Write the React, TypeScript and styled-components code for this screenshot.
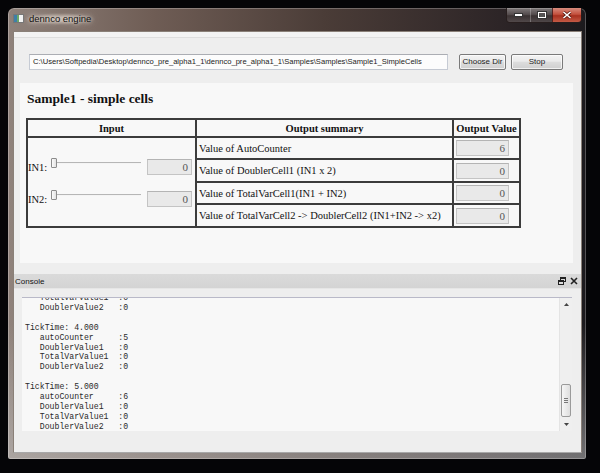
import React from 'react';
import styled, { createGlobalStyle } from 'styled-components';

const GlobalStyle = createGlobalStyle`
  html, body {
    margin: 0;
    padding: 0;
    background: #050507;
  }
`;

const Screen = styled.div`
  width: 600px;
  height: 473px;
  box-sizing: border-box;
  padding: 8px 14px 14px 8px;
  background: #050507;
  overflow: hidden;
`;

const Window = styled.div`
  height: 100%;
  display: flex;
  flex-direction: column;
  border-radius: 6px 6px 2px 2px;
  padding: 0 4px 6px 5px;
  box-sizing: border-box;
  background:
    linear-gradient(180deg, rgba(0, 0, 0, 0) 0%, rgba(0, 0, 0, 0) 70%, rgba(200, 200, 200, 0.5) 100%),
    linear-gradient(90deg, #8f827b 0%, #6f5d55 25%, #4a3c37 55%, #2d2527 85%, #1c1a1d 100%);
  box-shadow: inset 0 0 0 1px rgba(255, 255, 255, 0.25);
`;

const TitleBar = styled.div`
  height: 23px;
  display: flex;
  align-items: flex-start;
`;

const AppIcon = styled.svg`
  margin: 6px 0 0 0;
  flex: none;
`;

const TitleText = styled.span`
  margin-top: 5px;
  font-family: 'Liberation Sans', Arial, sans-serif;
  font-size: 9.5px;
  line-height: 12px;
  color: #111;
  padding: 0 5px;
  border-radius: 6px;
  text-shadow: 0 0 4px rgba(245, 238, 230, 0.95), 0 0 8px rgba(245, 238, 230, 0.8);
  background: radial-gradient(ellipse at center, rgba(236, 226, 216, 0.55) 20%, rgba(236, 226, 216, 0) 70%);
`;

const Spacer = styled.div`
  flex: 1;
`;

const Controls = styled.div`
  display: flex;
  height: 14px;
  border: 1px solid rgba(40, 30, 30, 0.9);
  border-top: none;
  border-radius: 0 0 4px 4px;
  overflow: hidden;
`;

const CtrlButton = styled.div<{ $close?: boolean; $w: number }>`
  width: ${(p) => p.$w}px;
  display: flex;
  align-items: center;
  justify-content: center;
  box-sizing: border-box;
  border-left: ${(p) => (p.$close ? '1px solid rgba(60,20,20,0.8)' : '1px solid rgba(255,255,255,0.25)')};
  background: ${(p) =>
    p.$close
      ? 'linear-gradient(180deg, #d88c7e 0%, #c4513e 45%, #a8301f 55%, #c45a45 100%)'
      : 'linear-gradient(180deg, rgba(200,195,195,0.55) 0%, rgba(120,110,110,0.5) 50%, rgba(70,60,60,0.6) 55%, rgba(120,110,110,0.5) 100%)'};
  &:first-child {
    border-left: none;
  }
`;

const Client = styled.div`
  flex: 1;
  display: flex;
  flex-direction: column;
  background: #eeeeee;
  border: 1px solid #8a8078;
  border-bottom-color: #a8a8a8;
  min-height: 0;
`;

const MenuStrip = styled.div`
  height: 5px;
  border-bottom: 1px solid #dedede;
  background: #f3f3f3;
`;

const PathRow = styled.div`
  display: flex;
  align-items: center;
  padding: 16px 18px 0 15px;
  height: 16px;
`;

const PathField = styled.div`
  flex: 1;
  height: 16px;
  box-sizing: border-box;
  border: 1px solid #c6cbd4;
  border-top-color: #abadb3;
  background: #fcfcfc;
  font-family: 'Liberation Sans', Arial, sans-serif;
  font-size: 7.6px;
  line-height: 14px;
  padding-left: 3px;
  color: #222;
  white-space: nowrap;
  overflow: hidden;
`;

const PushButton = styled.div<{ $w: number; $gap: number }>`
  width: ${(p) => p.$w}px;
  margin-left: ${(p) => p.$gap}px;
  height: 16px;
  box-sizing: border-box;
  border: 1px solid #7a7a7a;
  border-radius: 2px;
  background: linear-gradient(180deg, #f3f3f3 0%, #ebebeb 45%, #dddddd 50%, #cfcfcf 100%);
  box-shadow: inset 0 0 0 1px rgba(255, 255, 255, 0.7);
  font-family: 'Liberation Sans', Arial, sans-serif;
  font-size: 8px;
  line-height: 14px;
  text-align: center;
  color: #222;
`;

const Panel = styled.div`
  margin: 13px 8px 0 6px;
  height: 180px;
  box-sizing: border-box;
  padding: 8px 6px;
  background: #f8f8f8;
`;

const PanelTitle = styled.div`
  font-family: 'Liberation Serif', 'Times New Roman', serif;
  font-weight: bold;
  font-size: 13.5px;
  line-height: 16px;
  height: 16px;
  color: #111;
  padding-left: 1px;
  margin-bottom: 11px;
`;

const Table = styled.table`
  border-collapse: collapse;
  font-family: 'Liberation Serif', 'Times New Roman', serif;
  font-size: 10.5px;
  color: #111;
`;

const HeadCell = styled.th<{ $w: number }>`
  width: ${(p) => p.$w}px;
  height: 18px;
  padding: 0;
  border: 2px solid #3c3c3c;
  font-weight: bold;
  text-align: center;
  box-sizing: border-box;
`;

const Cell = styled.td<{ $h?: number }>`
  border: 2px solid #3c3c3c;
  padding: 0 2px;
  height: ${(p) => p.$h ?? 20}px;
  white-space: nowrap;
`;

const ValueCell = styled.td`
  border: 2px solid #3c3c3c;
  padding: 0 9px 0 2px;
`;

const InputCell = styled.td`
  border: 2px solid #3c3c3c;
  padding: 0;
  vertical-align: middle;
`;

const InputStack = styled.div`
  display: flex;
  flex-direction: column;
  gap: 16px;
  padding-top: 2px;
`;

const InputRow = styled.div`
  display: flex;
  align-items: flex-start;
  height: 16px;
`;

const InputLabel = styled.span`
  width: 23px;
  margin-top: 3px;
  line-height: 12px;
`;

const Slider = styled.div`
  width: 90px;
  height: 12px;
  display: flex;
  align-items: center;
  margin-top: -2px;
`;

const Groove = styled.div`
  flex: 1;
  height: 1px;
  background: #b6b6b6;
  border-bottom: 1px solid #f4f4f4;
  display: flex;
  align-items: center;
`;

const Handle = styled.div`
  width: 6px;
  height: 10px;
  box-sizing: border-box;
  border: 1px solid #8c8c8c;
  border-radius: 1px;
  background: linear-gradient(90deg, #fbfbfb, #e2e2e2);
`;

const ReadBox = styled.div<{ $w: number; $ml?: number }>`
  width: ${(p) => p.$w}px;
  margin-left: ${(p) => p.$ml ?? 0}px;
  height: 16px;
  box-sizing: border-box;
  border: 1px solid #c4c4c4;
  border-top-color: #b4b4b4;
  background: #e9e9e9;
  color: #555;
  font-family: 'Liberation Serif', 'Times New Roman', serif;
  font-size: 11px;
  line-height: 14px;
  text-align: right;
  padding-right: 3px;
`;

const DockTitle = styled.div`
  margin-top: 11px;
  height: 14px;
  display: flex;
  align-items: center;
  background: linear-gradient(180deg, #dadada 0%, #d4d4d4 100%);
  border-bottom: 1px solid #e6e6e6;
  padding: 0 3px 0 1px;
  font-family: 'Liberation Sans', Arial, sans-serif;
  font-size: 8px;
  color: #111;
`;

const DockIcons = styled.div`
  margin-left: auto;
  display: flex;
  gap: 4px;
  align-items: center;
`;

const DockBody = styled.div`
  flex: 1;
  padding: 8px 9px 21px 8px;
  display: flex;
  min-height: 0;
`;

const TextArea = styled.div`
  flex: 1;
  display: flex;
  background: #f8f8f8;
  border-top: 1px solid #b9b9c8;
  overflow: hidden;
`;

const Log = styled.pre`
  flex: 1;
  margin: -5px 0 0 0;
  padding-left: 3px;
  font-family: 'Liberation Mono', 'Courier New', monospace;
  font-size: 8.2px;
  line-height: 9.9px;
  color: #2a2a2a;
`;

const ScrollBar = styled.div`
  width: 12px;
  display: flex;
  flex-direction: column;
  align-items: center;
  background: #efefef;
  border-left: 1px solid #e4e4e4;
`;

const Arrow = styled.div`
  height: 13px;
  display: flex;
  align-items: center;
  justify-content: center;
`;

const Track = styled.div`
  flex: 1;
  width: 100%;
  display: flex;
  flex-direction: column;
  justify-content: flex-end;
  align-items: center;
`;

const Thumb = styled.div`
  width: 10px;
  height: 33px;
  box-sizing: border-box;
  border: 1px solid #9a9a9a;
  border-radius: 2px;
  background: linear-gradient(90deg, #f6f6f6, #dedede);
  display: flex;
  flex-direction: column;
  align-items: center;
  justify-content: center;
  gap: 1px;
  margin-bottom: 1px;
`;

const Grip = styled.div`
  width: 4px;
  height: 1px;
  background: #777;
`;

const logText = [
  '   TotalVarValue1  :0',
  '   DoublerValue2   :0',
  '',
  'TickTime: 4.000',
  '   autoCounter     :5',
  '   DoublerValue1   :0',
  '   TotalVarValue1  :0',
  '   DoublerValue2   :0',
  '',
  'TickTime: 5.000',
  '   autoCounter     :6',
  '   DoublerValue1   :0',
  '   TotalVarValue1  :0',
  '   DoublerValue2   :0',
].join('\n');

const outputs = [
  { label: 'Value of AutoCounter', value: '6', h: 20 },
  { label: 'Value of DoublerCell1 (IN1 x 2)', value: '0', h: 21 },
  { label: 'Value of TotalVarCell1(IN1 + IN2)', value: '0', h: 20 },
  { label: 'Value of TotalVarCell2 -> DoublerCell2 (IN1+IN2 -> x2)', value: '0', h: 21 },
];

const App: React.FC = () => {
  return (
    <>
      <GlobalStyle />
      <Screen>
        <Window>
          <TitleBar>
            <AppIcon width="11" height="9" viewBox="0 0 11 9">
              <rect x="0.5" y="0.5" width="10" height="8" fill="#f2f2f2" stroke="#777" />
              <rect x="1" y="1" width="3" height="7" fill="#3f7fa8" />
              <rect x="4" y="1" width="2" height="7" fill="#6aa86a" />
            </AppIcon>
            <TitleText>dennco engine</TitleText>
            <Spacer />
            <Controls>
              <CtrlButton $w={23}>
                <svg width="9" height="4" viewBox="0 0 9 4">
                  <rect x="0.5" y="0.5" width="8" height="3" fill="#fff" stroke="#333" />
                </svg>
              </CtrlButton>
              <CtrlButton $w={22}>
                <svg width="10" height="8" viewBox="0 0 10 8">
                  <rect x="0.5" y="0.5" width="9" height="7" fill="none" stroke="#333" />
                  <rect x="1.5" y="1.5" width="7" height="5" fill="none" stroke="#fff" strokeWidth="1" />
                  <rect x="2.5" y="3" width="5" height="3" fill="#555" />
                </svg>
              </CtrlButton>
              <CtrlButton $w={29} $close>
                <svg width="10" height="8" viewBox="0 0 10 8">
                  <path d="M1.5 1 L8.5 7 M8.5 1 L1.5 7" stroke="#5a1a12" strokeWidth="3" />
                  <path d="M1.5 1 L8.5 7 M8.5 1 L1.5 7" stroke="#fff" strokeWidth="1.6" />
                </svg>
              </CtrlButton>
            </Controls>
          </TitleBar>
          <Client>
            <MenuStrip />
            <PathRow>
              <PathField>
                C:\Users\Softpedia\Desktop\dennco_pre_alpha1_1\dennco_pre_alpha1_1\Samples\Samples\Sample1_SimpleCells
              </PathField>
              <PushButton $w={47} $gap={11}>Choose Dir</PushButton>
              <PushButton $w={52} $gap={5}>Stop</PushButton>
            </PathRow>
            <Panel>
              <PanelTitle>Sample1 - simple cells</PanelTitle>
              <Table>
                <thead>
                  <tr>
                    <HeadCell $w={169}>Input</HeadCell>
                    <HeadCell $w={257}>Output summary</HeadCell>
                    <HeadCell $w={67}>Output Value</HeadCell>
                  </tr>
                </thead>
                <tbody>
                  {outputs.map((o, i) => (
                    <tr key={o.label}>
                      {i === 0 && (
                        <InputCell rowSpan={4}>
                          <InputStack>
                            {['IN1:', 'IN2:'].map((name) => (
                              <InputRow key={name}>
                                <InputLabel>{name}</InputLabel>
                                <Slider>
                                  <Groove>
                                    <Handle />
                                  </Groove>
                                </Slider>
                                <ReadBox $w={45} $ml={6}>0</ReadBox>
                              </InputRow>
                            ))}
                          </InputStack>
                        </InputCell>
                      )}
                      <Cell $h={o.h}>{o.label}</Cell>
                      <ValueCell>
                        <ReadBox $w={53}>{o.value}</ReadBox>
                      </ValueCell>
                    </tr>
                  ))}
                </tbody>
              </Table>
            </Panel>
            <DockTitle>
              Console
              <DockIcons>
                <svg width="8" height="8" viewBox="0 0 8 8">
                  <rect x="2.5" y="0.5" width="5" height="4" fill="none" stroke="#222" />
                  <rect x="2.5" y="0.5" width="5" height="1.5" fill="#222" />
                  <rect x="0.5" y="3.5" width="5" height="4" fill="#ddd" stroke="#222" />
                  <rect x="0.5" y="3.5" width="5" height="1.5" fill="#222" />
                </svg>
                <svg width="8" height="8" viewBox="0 0 8 8">
                  <path d="M1 1 L7 7 M7 1 L1 7" stroke="#222" strokeWidth="1.6" />
                </svg>
              </DockIcons>
            </DockTitle>
            <DockBody>
              <TextArea>
                <Log>{logText}</Log>
                <ScrollBar>
                  <Arrow>
                    <svg width="5" height="3" viewBox="0 0 5 3">
                      <path d="M0 3 L2.5 0 L5 3 Z" fill="#444" />
                    </svg>
                  </Arrow>
                  <Track>
                    <Thumb>
                      <Grip />
                      <Grip />
                      <Grip />
                    </Thumb>
                  </Track>
                  <Arrow>
                    <svg width="5" height="3" viewBox="0 0 5 3">
                      <path d="M0 0 L5 0 L2.5 3 Z" fill="#444" />
                    </svg>
                  </Arrow>
                </ScrollBar>
              </TextArea>
            </DockBody>
          </Client>
        </Window>
      </Screen>
    </>
  );
};

export default App;
